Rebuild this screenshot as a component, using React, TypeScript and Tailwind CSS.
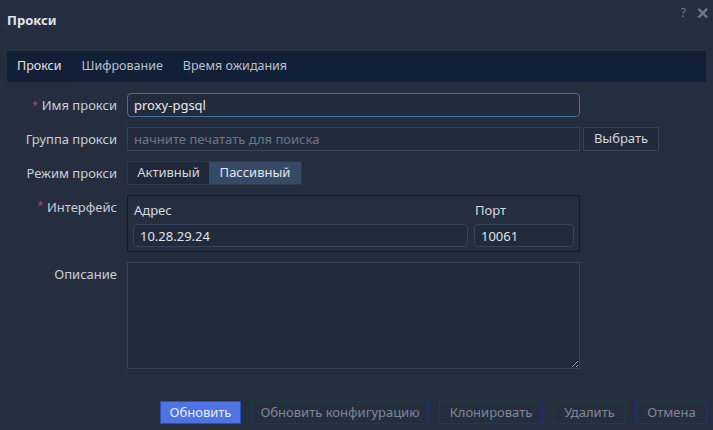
import React, { useState } from 'react';

const font = { fontFamily: '"Noto Sans", "Open Sans", sans-serif' };

const Label: React.FC<{ text: string; required?: boolean; top?: boolean }> = ({ text, required, top }) => (
  <div className={`w-[117px] shrink-0 text-right text-[13px] text-[#c9ced6] ${top ? 'pt-[3px]' : 'leading-6'}`}>
    {required && <span className="mr-1 text-[#c2406a] text-[10px] align-top">*</span>}
    {text}
  </div>
);

const App: React.FC = () => {
  const [mode, setMode] = useState<'active' | 'passive'>('passive');
  const [tab, setTab] = useState(0);
  const tabs = ['Прокси', 'Шифрование', 'Время ожидания'];

  return (
    <div className="w-[713px] h-[430px] bg-[#252e3f] text-[#d5d9e0] overflow-hidden" style={font}>
      {/* header */}
      <div className="flex items-center justify-between h-[40px] pl-[7px] pr-[4px]">
        <h2 className="text-[13px] font-bold text-[#e3e6ea] mt-[1px]">Прокси</h2>
        <div className="flex items-center gap-[10px] text-[#6b7e8e] -mt-[14px]">
          <span className="text-[12px]">?</span>
          <span className="text-[16px] font-bold leading-none">✕</span>
        </div>
      </div>

      {/* tabs */}
      <div className="mx-[7px] mt-[11px] h-[31px] bg-[#112036] flex text-[12.5px]">
        {tabs.map((t, i) => (
          <button
            key={t}
            onClick={() => setTab(i)}
            className={`px-[10px] h-full border-b-[3px] pt-[2px] ${
              tab === i ? 'border-[#1b222e] text-[#e0e4ea]' : 'border-transparent text-[#b9c1cc]'
            }`}
          >
            {t}
          </button>
        ))}
      </div>

      {/* form */}
      <div className="mt-[11px] flex flex-col gap-[10px]">
        <div className="flex gap-[10px]">
          <Label text="Имя прокси" required />
          <input
            defaultValue="proxy-pgsql"
            className="w-[453px] h-[24px] px-[6px] rounded-[4px] border border-[#4d6b9c] bg-[#222b3b] text-[13px] text-[#e6e9ee] outline-none"
          />
        </div>

        <div className="flex gap-[10px]">
          <Label text="Группа прокси" />
          <input
            placeholder="начните печатать для поиска"
            className="w-[453px] h-[24px] px-[6px] border border-[#33455d] bg-[#222b3b] text-[13px] text-[#e6e9ee] placeholder:text-[#6d7785] outline-none"
          />
          <button className="-ml-[7px] w-[76px] h-[24px] border border-[#33455d] bg-[#212a3a] text-[13px] text-[#d0d5dc]">
            Выбрать
          </button>
        </div>

        <div className="flex gap-[10px]">
          <Label text="Режим прокси" />
          <div className="flex h-[24px] border border-[#2c3a4e] text-[13px]">
            <button
              onClick={() => setMode('active')}
              className={`w-[81px] ${mode === 'active' ? 'bg-[#364a66]' : 'bg-[#1e2838]'} text-[#d3d8df]`}
            >
              Активный
            </button>
            <button
              onClick={() => setMode('passive')}
              className={`w-[92px] ${mode === 'passive' ? 'bg-[#364a66]' : 'bg-[#1e2838]'} text-[#e3e7ec]`}
            >
              Пассивный
            </button>
          </div>
        </div>

        <div className="flex gap-[10px]">
          <Label text="Интерфейс" required top />
          <div className="w-[453px] h-[57px] border border-[#141a23] flex gap-[6px] px-[5px] pt-[6px]">
            <div className="flex flex-col w-[336px]">
              <span className="text-[13px] text-[#d5d9e0] leading-[16px] pl-[1px]">Адрес</span>
              <input
                defaultValue="10.28.29.24"
                className="mt-[6px] h-[23px] px-[6px] rounded-[4px] border border-[#33455d] bg-[#222b3b] text-[13px] text-[#dfe3e8] outline-none"
              />
            </div>
            <div className="flex flex-col w-[100px]">
              <span className="text-[13px] text-[#d5d9e0] leading-[16px] pl-[1px]">Порт</span>
              <input
                defaultValue="10061"
                className="mt-[6px] h-[23px] px-[6px] rounded-[4px] border border-[#33455d] bg-[#222b3b] text-[13px] text-[#dfe3e8] outline-none"
              />
            </div>
          </div>
        </div>

        <div className="flex gap-[10px]">
          <Label text="Описание" top />
          <textarea className="w-[453px] h-[107px] border border-[#33455d] bg-[#222b3b] text-[13px] outline-none resize-y" />
        </div>
      </div>

      {/* footer */}
      <div className="mt-[32px] pr-[6px] flex justify-end gap-[10px] text-[13px]">
        <button className="w-[81px] h-[23px] bg-[#4f73e0] border border-[#2a4fb8] text-[#e8ecf5]">Обновить</button>
        <button className="w-[178px] h-[23px] border border-[#1b3275] text-[#7d8897]">Обновить конфигурацию</button>
        <button className="w-[104px] h-[23px] border border-[#1b3275] text-[#7d8897]">Клонировать</button>
        <button className="w-[73px] h-[23px] border border-[#1b3275] text-[#7d8897]">Удалить</button>
        <button className="w-[71px] h-[23px] border border-[#1b3275] text-[#7d8897]">Отмена</button>
      </div>
    </div>
  );
};

export default App;
